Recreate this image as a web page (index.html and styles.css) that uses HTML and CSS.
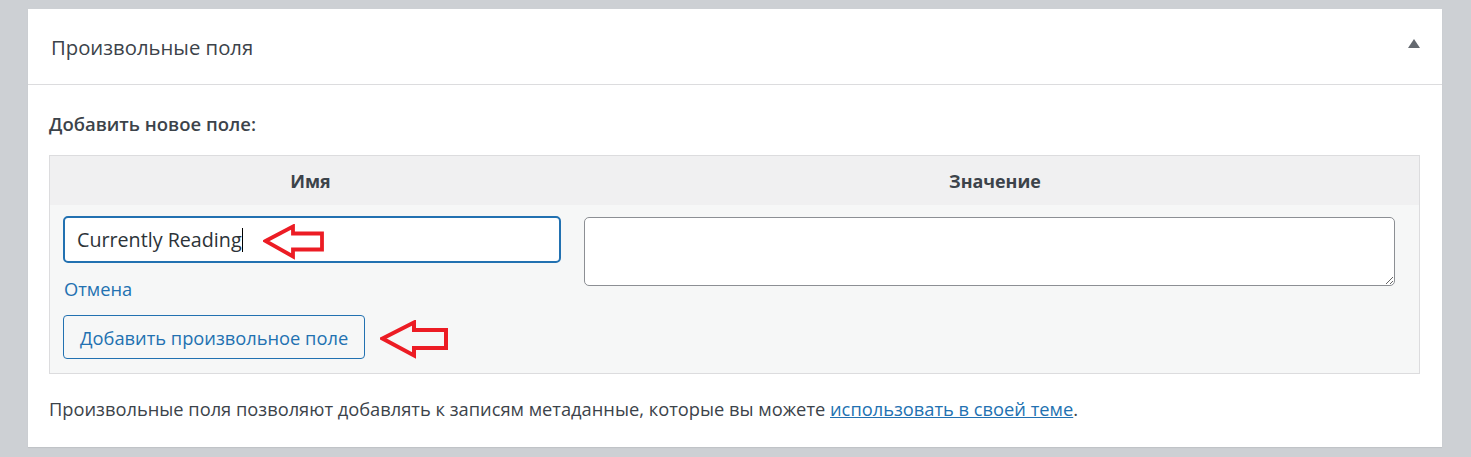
FILE: index.html
```html
<!DOCTYPE html>
<html lang="ru">
<head>
<meta charset="utf-8">
<title>Произвольные поля</title>
<link rel="stylesheet" href="styles.css">
</head>
<body>
<div class="postbox">
  <div class="postbox-header">
    <h2 class="postbox-title">Произвольные поля</h2>
    <span class="toggle-arrow"></span>
  </div>
  <div class="inside">
    <p class="add-title">Добавить новое поле:</p>
    <div class="meta-table">
      <div class="meta-head">
        <div class="col-name">Имя</div>
        <div class="col-value">Значение</div>
      </div>
      <div class="meta-body">
        <div class="col-name cell-name">
          <div class="input-wrap">
            <input class="text-input is-focused" type="text" value="Currently Reading">
            <span class="caret"></span>
            <svg class="red-arrow arrow-one" width="62" height="36" viewBox="0 0 62 36">
              <polygon points="2.5,17 30,2.5 30,9.5 59,9.5 59,25.5 30,25.5 30,32.5" fill="none" stroke="#ec1c24" stroke-width="3.8" stroke-linejoin="miter"/>
            </svg>
          </div>
          <a class="cancel-link" href="#">Отмена</a>
          <div class="btn-wrap">
            <button class="add-button" type="button">Добавить произвольное поле</button>
            <svg class="red-arrow arrow-two" width="70" height="40" viewBox="0 0 70 40">
              <polygon points="2.5,18.5 34,2.5 34,10 66,10 66,28 34,28 34,35.5" fill="none" stroke="#ec1c24" stroke-width="4" stroke-linejoin="miter"/>
            </svg>
          </div>
        </div>
        <div class="col-value cell-value">
          <textarea class="text-area"></textarea>
        </div>
      </div>
    </div>
    <p class="note">Произвольные поля позволяют добавлять к записям метаданные, которые вы можете <a href="#">использовать в своей теме</a>.</p>
  </div>
</div>
</body>
</html>
```

FILE: styles.css
```css
html, body {
  margin: 0;
  padding: 0;
  background: #cdd0d4;
}
body {
  font-family: "Open Sans", "Noto Sans", sans-serif;
  color: #3c434a;
  padding-top: 9px;
  height: 457px;
  box-sizing: border-box;
  overflow: hidden;
}
.postbox {
  margin-left: 28px;
  width: 1414px;
  background: #fff;
  box-shadow: 0 1px 1px rgba(0,0,0,0.06);
}
.postbox-header {
  height: 75px;
  display: flex;
  align-items: center;
  justify-content: space-between;
  border-bottom: 1px solid #dcdcde;
  padding: 0 22px 0 23px;
}
.postbox-title {
  margin: 0;
  font-size: 20.3px;
  line-height: 28px;
  font-weight: 400;
  color: #3c434a;
}
.toggle-arrow {
  width: 0;
  height: 0;
  border-left: 6px solid transparent;
  border-right: 6px solid transparent;
  border-bottom: 9px solid #646970;
  margin-bottom: 6px;
}
.inside {
  padding: 0 22px 1px 21px;
}
.add-title {
  margin: 26px 0 18px;
  font-size: 18.5px;
  font-weight: 600;
  color: #3c434a;
  line-height: 26px;
}
.meta-table {
  border: 1px solid #dcdcde;
  background: #f6f7f7;
}
.meta-head {
  display: flex;
  height: 49px;
  align-items: center;
  background: #f0f0f1;
  font-weight: 700;
  font-size: 17.9px;
  color: #3c434a;
}
.col-name {
  width: 521px;
  text-align: center;
  flex: none;
}
.col-value {
  flex: 1;
  text-align: center;
}
.meta-body {
  display: flex;
  align-items: flex-start;
}
.cell-name {
  text-align: left;
  padding: 11px 0 14px 13px;
  box-sizing: border-box;
}
.input-wrap {
  position: relative;
  width: 498px;
}
.text-input {
  display: block;
  width: 498px;
  height: 47px;
  box-sizing: border-box;
  border: 2px solid #2271b1;
  border-radius: 5px;
  padding: 0 12px;
  font-family: inherit;
  font-size: 19.7px;
  color: #2c3338;
  background: #fff;
  outline: none;
}
.caret {
  position: absolute;
  left: 179px;
  top: 12px;
  width: 1px;
  height: 24px;
  background: #000;
}
.red-arrow {
  position: absolute;
  display: block;
}
.arrow-one {
  left: 200px;
  top: 8px;
}
.cancel-link {
  display: block;
  margin-top: 13px;
  margin-left: 1px;
  font-size: 18.3px;
  line-height: 26px;
  color: #2271b1;
  text-decoration: none;
}
.btn-wrap {
  position: relative;
  margin-top: 13px;
}
.add-button {
  display: block;
  height: 44px;
  padding: 0 16px;
  border: 1px solid #2271b1;
  border-radius: 4px;
  background: #f6f7f7;
  color: #2271b1;
  font-family: inherit;
  font-size: 18.3px;
}
.arrow-two {
  left: 317px;
  top: 5px;
}
.cell-value {
  padding: 12px 24px 0 13px;
}
.text-area {
  display: block;
  width: 100%;
  height: 69px;
  box-sizing: border-box;
  border: 1px solid #8c8f94;
  border-radius: 5px;
  background: #fff;
  resize: both;
}
.note {
  margin: 22px 0 24px;
  font-size: 18.3px;
  line-height: 26px;
  color: #3c434a;
}
.note a {
  color: #2271b1;
  text-decoration: underline;
}
```
